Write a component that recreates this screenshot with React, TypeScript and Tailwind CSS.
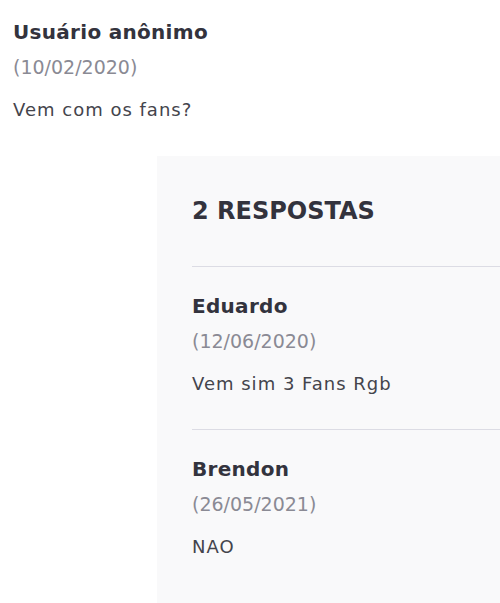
const replies = [
  { name: "Eduardo", date: "(12/06/2020)", text: "Vem sim 3 Fans Rgb" },
  { name: "Brendon", date: "(26/05/2021)", text: "NAO" },
];

function Meta({ name, date }: { name: string; date: string }) {
  return (
    <>
      <div className="text-[20px] font-bold leading-[28px] tracking-[0.3px] text-[#33333d]">{name}</div>
      <div className="mt-[8px] text-[19px] leading-[26px] text-[#8a8a94]">{date}</div>
    </>
  );
}

function Body({ children }: { children: React.ReactNode }) {
  return (
    <p className="mt-[17px] text-[18px] leading-[26px] tracking-[1px] text-[#44444c]">{children}</p>
  );
}

export default function App() {
  return (
    <div
      className="h-[603px] overflow-hidden bg-white"
      style={{ fontFamily: "'DejaVu Sans', sans-serif" }}
    >
      {/* Question */}
      <div className="px-[13px] pt-[18px]">
        <Meta name="Usuário anônimo" date="(10/02/2020)" />
        <Body>Vem com os fans?</Body>
      </div>

      {/* Answers */}
      <div className="ml-[157px] mt-[33px] w-[420px] bg-[#f9f9fa] pl-[35px] pt-[39px] pb-[40px]">
        <h2 className="text-[24px] font-bold leading-[32px] text-[#33333d]">2 RESPOSTAS</h2>
        <div className="mt-[39px]">
          {replies.map((r) => (
            <div key={r.name} className="border-t border-[#dcdce4] pt-[25px] pb-[32px]">
              <Meta name={r.name} date={r.date} />
              <Body>{r.text}</Body>
            </div>
          ))}
        </div>
      </div>
    </div>
  );
}
